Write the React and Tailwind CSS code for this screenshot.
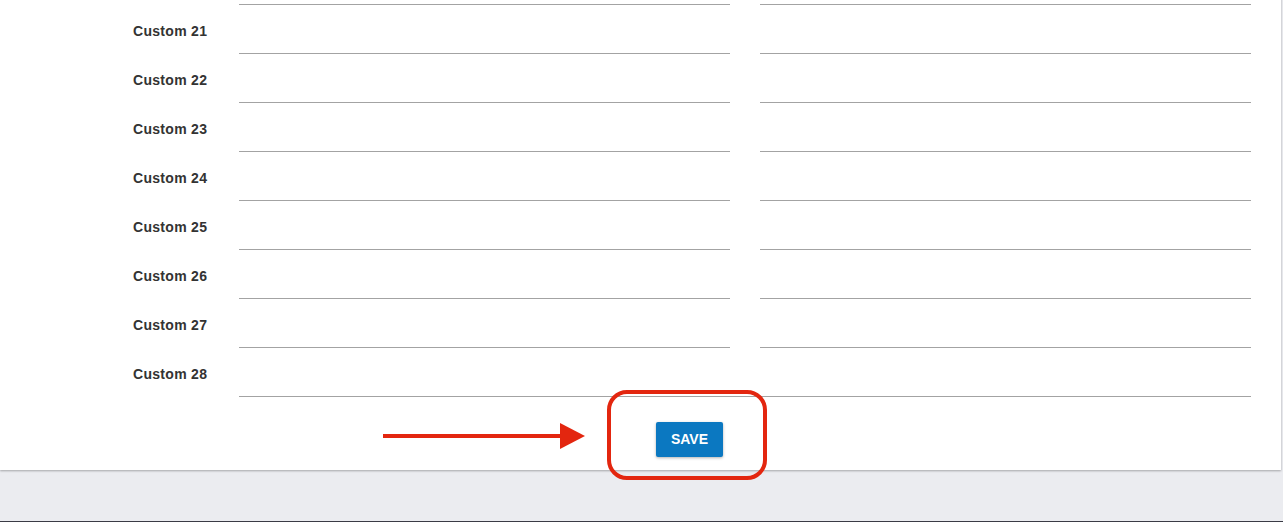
import React from "react";

const ROWS = [21, 22, 23, 24, 25, 26, 27];

function Field({ wide }) {
  return (
    <div
      className={`h-[49px] border-b border-[#a3a3a3] ${wide ? "w-[1012px]" : "w-[491px]"}`}
    />
  );
}

function Row({ n, wide }) {
  return (
    <div className="flex items-start">
      <div className="w-[106px] shrink-0 pt-[18px] text-[14px] leading-[17px] font-bold tracking-[0.3px] text-[#333]">
        {n ? `Custom ${n}` : ""}
      </div>
      {wide ? (
        <Field wide />
      ) : (
        <div className="flex gap-[30px]">
          <Field />
          <Field />
        </div>
      )}
    </div>
  );
}

export default function App() {
  return (
    <div
      className="relative flex h-[522px] flex-col overflow-hidden bg-[#ebecf0]"
      style={{ fontFamily: '"Liberation Sans", Arial, sans-serif' }}
    >
      {/* form card, scrolled so its top is out of view */}
      <div className="mr-[2px] -mt-[44px] bg-white pl-[133px] shadow-[0_1px_2px_rgba(0,0,0,0.3)]">
        <Row />
        {ROWS.map((n) => (
          <Row key={n} n={n} />
        ))}
        <Row n={28} wide />
        <div className="pb-[13px] pl-[523px] pt-[25px]">
          <button className="h-[35px] w-[67px] rounded-[2px] bg-[#0b78c1] text-[14px] font-bold text-white shadow-[0_1px_3px_rgba(0,0,0,0.3)]">
            SAVE
          </button>
        </div>
      </div>

      <div className="flex-1" />
      <div className="h-px bg-[#3a3b45]" />

      {/* annotation overlay */}
      <div className="absolute left-[607px] top-[390px] h-[90px] w-[160px] rounded-[20px] border-[4px] border-[#e3260f]" />
      <svg
        className="absolute left-[383px] top-[423px]"
        width="203"
        height="26"
        viewBox="0 0 203 26"
      >
        <rect x="0" y="11" width="180" height="4" fill="#e3260f" />
        <polygon points="177,0 202,13 177,26" fill="#e3260f" />
      </svg>
    </div>
  );
}
